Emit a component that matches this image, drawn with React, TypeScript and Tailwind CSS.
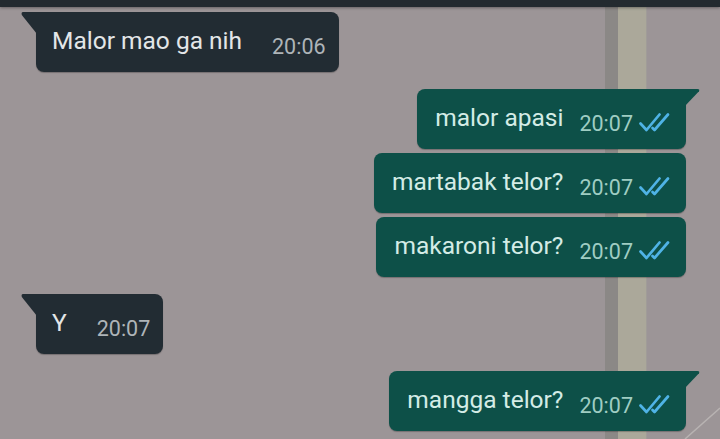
import React from 'react';

type Msg = { text: string; time: string; out: boolean; tail: boolean };

const messages: Msg[] = [
  { text: 'Malor mao ga nih', time: '20:06', out: false, tail: true },
  { text: 'malor apasi', time: '20:07', out: true, tail: true },
  { text: 'martabak telor?', time: '20:07', out: true, tail: false },
  { text: 'makaroni telor?', time: '20:07', out: true, tail: false },
  { text: 'Y', time: '20:07', out: false, tail: true },
  { text: 'mangga telor?', time: '20:07', out: true, tail: true },
];

function DoubleCheck() {
  return (
    <svg width="31" height="20" viewBox="0 0 31 20" fill="none" className="block">
      <path d="M1.5 11.5 L7.5 18 L20.5 2.5" stroke="#4fb3e6" strokeWidth="2.7" strokeLinecap="round" strokeLinejoin="round" />
      <path d="M13.5 16 L15.5 18 L29 2.5" stroke="#4fb3e6" strokeWidth="2.7" strokeLinecap="round" strokeLinejoin="round" />
    </svg>
  );
}

function Bubble({ m }: { m: Msg }) {
  if (!m.out) {
    return (
      <div className="relative ml-[36px] self-start">
        {m.tail && (
          <svg width="16" height="22" viewBox="0 0 16 22" className="absolute left-[-15px] top-0">
            <path d="M2 0 H16 V22 L0.8 3 Q0 0 2 0 Z" fill="#222c33" />
          </svg>
        )}
        <div className="flex h-[60px] items-start rounded-lg rounded-tl-none bg-[#222c33] pl-[16px] pr-[13px] shadow-[0_1px_1px_rgba(0,0,0,0.25)]">
          <span className="pt-[15px] text-[24.5px] leading-[28px] text-[#e3e6e8]">{m.text}</span>
          <span className="ml-[30px] pt-[23px] text-[21.5px] leading-[24px] text-[#aeb4b8]">{m.time}</span>
        </div>
      </div>
    );
  }
  return (
    <div className="relative mr-[34px] self-end">
      {m.tail && (
        <svg width="16" height="18" viewBox="0 0 16 18" className="absolute right-[-14px] top-0">
          <path d="M0 0 H13.5 Q16 0 15 2.2 L0 18 Z" fill="#0d5048" />
        </svg>
      )}
      <div
        className={`flex h-[60px] items-start rounded-lg bg-[#0d5048] pl-[18px] pr-[16px] shadow-[0_1px_1px_rgba(0,0,0,0.25)] ${m.tail ? 'rounded-tr-none' : ''}`}
      >
        <span className="pt-[15px] text-[24.5px] leading-[28px] text-[#d4ece6]">{m.text}</span>
        <span className="ml-[16px] pt-[23px] text-[21.5px] leading-[24px] text-[#9fcdc3]">{m.time}</span>
        <span className="ml-[6px] pt-[23px]">
          <DoubleCheck />
        </span>
      </div>
    </div>
  );
}

export default function App() {
  const gaps = ['mt-[5px]', 'mt-[17px]', 'mt-[4px]', 'mt-[4px]', 'mt-[17px]', 'mt-[17px]'];
  return (
    <main
      className="relative h-[439px] w-[720px] overflow-hidden bg-[#9c9597]"
      style={{ fontFamily: 'Roboto, "Noto Sans", sans-serif' }}
    >
      {/* background: pole in the wallpaper photo */}
      <div className="pointer-events-none absolute inset-y-0 left-[605px] w-[13px] bg-[#8b8886]" />
      <div className="pointer-events-none absolute inset-y-0 left-[618px] w-[28px] bg-[#aba89a]" />
      <div className="pointer-events-none absolute inset-y-0 left-[646px] w-px bg-[#a09c98]" />
      <svg className="pointer-events-none absolute bottom-0 right-0" width="40" height="40" viewBox="0 0 40 40">
        <path d="M5 40 L40 9" stroke="#b8b3b2" strokeWidth="1.5" />
      </svg>

      {/* top app bar edge */}
      <div className="absolute inset-x-0 top-0 z-10 h-[7px] bg-[#232a2f] shadow-[0_1px_3px_rgba(0,0,0,0.35)]" />

      <div className="relative flex flex-col pt-[7px]">
        {messages.map((m, i) => (
          <div key={i} className={`flex flex-col ${gaps[i]}`}>
            <Bubble m={m} />
          </div>
        ))}
      </div>
    </main>
  );
}
